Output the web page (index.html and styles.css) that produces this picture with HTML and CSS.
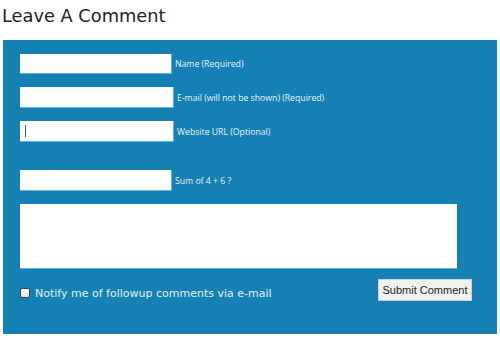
FILE: index.html
```html
<!DOCTYPE html>
<html lang="en">
<head>
    <meta charset="UTF-8">
    <meta name="viewport" content="width=device-width, initial-scale=1.0">
    <title>Leave A Comment</title>
    <link rel="stylesheet" href="styles.css">
</head>
<body>
    <h1 class="title">Leave A Comment</h1>

    <form class="comment-form">
        <div class="field field-name">
            <input type="text" class="text-input narrow">
            <label>Name (Required)</label>
        </div>
        <div class="field">
            <input type="text" class="text-input">
            <label>E-mail (will not be shown) (Required)</label>
        </div>
        <div class="field">
            <div class="text-input url-input"><span class="caret"></span></div>
            <label>Website URL (Optional)</label>
        </div>
        <div class="field field-sum">
            <input type="text" class="text-input narrow">
            <label>Sum of 4 + 6 ?</label>
        </div>
        <textarea class="message"></textarea>
        <div class="form-footer">
            <label class="notify">
                <span class="checkbox"></span>
                Notify me of followup comments via e-mail
            </label>
            <button type="button" class="submit">Submit Comment</button>
        </div>
    </form>
</body>
</html>
```

FILE: styles.css
```css
body {
    margin: 0;
    background-color: #fff;
    font-family: 'DejaVu Sans', 'Liberation Sans', sans-serif;
}
.title {
    margin: 0;
    padding: 5px 0 0 2px;
    height: 35px;
    box-sizing: border-box;
    font-size: 17.8px;
    font-weight: normal;
    line-height: 22px;
    color: #222;
}
.comment-form {
    box-sizing: border-box;
    margin-left: 3px;
    width: 494px;
    height: 294px;
    padding: 14px 0 0 17px;
    background-color: #1580b4;
}
.title + .comment-form { margin-top: 5px; }
.field {
    display: flex;
    align-items: center;
    height: 21px;
    margin-bottom: 13px;
}
.field-name { height: 20px; }
.field-sum { margin-top: 28px; }
.field label {
    margin-left: 3px;
    font-family: 'Open Sans', sans-serif;
    font-size: 8.7px;
    color: #eaf3f8;
}
.text-input {
    box-sizing: border-box;
    width: 154px;
    height: 100%;
    margin: 0;
    border: none;
    border-right: 1px solid #5fb3dc;
    border-bottom: 1px solid #5fb3dc;
    background-color: #fff;
    outline: none;
}
.text-input.narrow { width: 152px; }
.url-input {
    display: flex;
    align-items: center;
    padding-left: 5px;
}
.caret {
    width: 1px;
    height: 12px;
    background-color: #555;
}
.message {
    display: block;
    box-sizing: border-box;
    width: 437px;
    height: 65px;
    margin: 0;
    border: none;
    border-bottom: 1px solid #5fb3dc;
    background-color: #fff;
    resize: none;
}
.form-footer {
    display: flex;
    align-items: center;
    justify-content: space-between;
    width: 452px;
    margin-top: 10px;
}
.notify {
    display: flex;
    align-items: center;
    gap: 5px;
    margin-top: 6px;
    font-size: 11px;
    color: #e6f2f8;
}
.checkbox {
    box-sizing: border-box;
    width: 10px;
    height: 10px;
    border: 1px solid #3a4650;
    border-radius: 2px;
    background: linear-gradient(#fff, #e4e4e4);
}
.submit {
    width: 94px;
    height: 22px;
    padding: 0;
    white-space: nowrap;
    border: 1px solid #c9d3d9;
    background-color: #f1f1f1;
    font-family: 'Liberation Sans', Arial, sans-serif;
    font-size: 11px;
    color: #222;
}
```
